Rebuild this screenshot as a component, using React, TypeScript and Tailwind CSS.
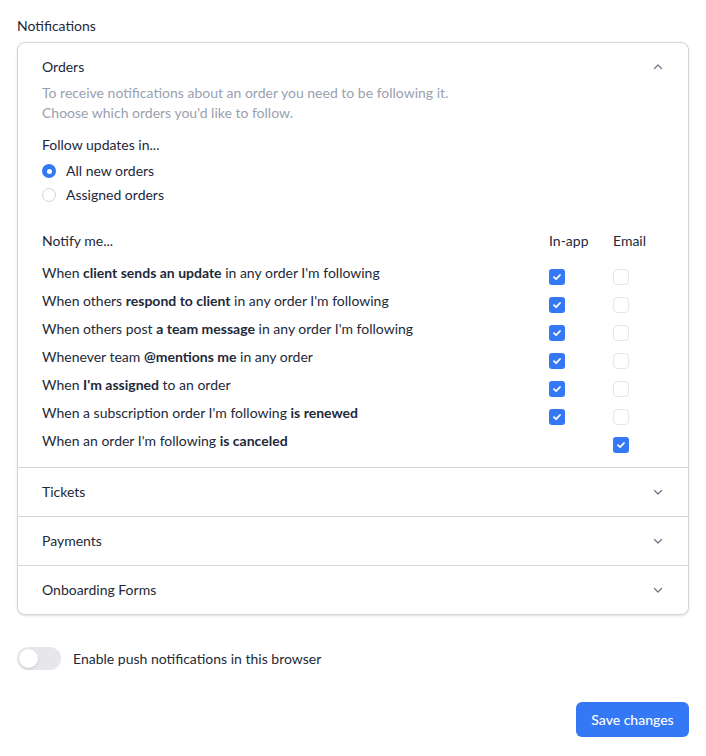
import { useState } from 'react'

const rows = [
  { pre: 'When ', bold: 'client sends an update', post: " in any order I'm following", app: true, email: false },
  { pre: 'When others ', bold: 'respond to client', post: " in any order I'm following", app: true, email: false },
  { pre: 'When others post ', bold: 'a team message', post: " in any order I'm following", app: true, email: false },
  { pre: 'Whenever team ', bold: '@mentions me', post: ' in any order', app: true, email: false },
  { pre: 'When ', bold: "I'm assigned", post: ' to an order', app: true, email: false },
  { pre: "When a subscription order I'm following ", bold: 'is renewed', post: '', app: true, email: false },
  { pre: "When an order I'm following ", bold: 'is canceled', post: '', app: null, email: true },
]

const Chevron = ({ up }: { up?: boolean }) => (
  <svg width="12" height="12" viewBox="0 0 12 12" fill="none" className="text-gray-500">
    <path
      d={up ? 'M2.5 7.5 6 4l3.5 3.5' : 'M2.5 4.5 6 8l3.5-3.5'}
      stroke="currentColor"
      strokeWidth="1.2"
      strokeLinecap="round"
      strokeLinejoin="round"
    />
  </svg>
)

const Checkbox = ({ checked }: { checked: boolean }) =>
  checked ? (
    <span className="flex h-4 w-4 items-center justify-center rounded-[3px] bg-[#3478f6]">
      <svg width="10" height="10" viewBox="0 0 10 10" fill="none">
        <path d="M2 5.2 4.1 7.2 8 3" stroke="white" strokeWidth="1.8" strokeLinecap="round" strokeLinejoin="round" />
      </svg>
    </span>
  ) : (
    <span className="block h-4 w-4 rounded-[4px] border border-gray-200 bg-white" />
  )

const Section = ({ title }: { title: string }) => (
  <div className="flex items-center justify-between border-t border-gray-300 py-[14px] pl-6 pr-6">
    <span className="leading-5 text-gray-800">{title}</span>
    <Chevron />
  </div>
)

export default function App() {
  const [follow, setFollow] = useState('all')

  return (
    <div className="min-h-screen bg-white px-[17px] pt-4 text-[14px] text-gray-800" style={{ fontFamily: 'Lato, "Open Sans", sans-serif' }}>
      <h2 className="leading-5">Notifications</h2>
      <div className="mt-1.5 rounded-lg border border-gray-300 bg-white shadow-sm">
        <div className="px-6 pb-[14px] pt-[14px]">
          <div className="flex items-center justify-between">
            <span className="leading-5">Orders</span>
            <Chevron up />
          </div>
          <p className="mt-1.5 leading-5 text-gray-400">
            To receive notifications about an order you need to be following it.
            <br />
            Choose which orders you'd like to follow.
          </p>
          <p className="mt-3 leading-5">Follow updates in...</p>
          <div className="mt-1.5 flex flex-col gap-1">
            {[
              { id: 'all', label: 'All new orders' },
              { id: 'assigned', label: 'Assigned orders' },
            ].map((o) => (
              <label key={o.id} className="flex h-5 cursor-pointer items-center gap-2.5" onClick={() => setFollow(o.id)}>
                {follow === o.id ? (
                  <span className="flex h-[14px] w-[14px] items-center justify-center rounded-full bg-[#3478f6]">
                    <span className="h-[5px] w-[5px] rounded-full bg-white" />
                  </span>
                ) : (
                  <span className="block h-[14px] w-[14px] rounded-full border border-gray-300 bg-white" />
                )}
                <span className="leading-5">{o.label}</span>
              </label>
            ))}
          </div>

          <div className="mt-[26px] flex items-center">
            <span className="flex-1 leading-5">Notify me...</span>
            <span className="w-16 leading-5">In-app</span>
            <span className="w-[51px] leading-5">Email</span>
          </div>
          <div className="mt-3 flex flex-col gap-[6px]">
            {rows.map((r, i) => (
              <div key={i} className="flex items-start">
                <span className="flex-1 leading-5">
                  {r.pre}
                  <b className="font-bold">{r.bold}</b>
                  {r.post}
                </span>
                <span className="w-16 pt-1.5">{r.app !== null && <Checkbox checked={!!r.app} />}</span>
                <span className="w-[51px] pt-1.5">
                  <Checkbox checked={r.email} />
                </span>
              </div>
            ))}
          </div>
        </div>
        <Section title="Tickets" />
        <Section title="Payments" />
        <Section title="Onboarding Forms" />
      </div>

      <div className="mt-8 flex items-center gap-3">
        <span className="flex h-[23px] w-11 items-center rounded-full bg-gray-200 p-[2px]">
          <span className="h-[19px] w-[19px] rounded-full bg-white shadow-sm" />
        </span>
        <span className="leading-5">Enable push notifications in this browser</span>
      </div>

      <div className="mt-8 flex justify-end">
        <button className="h-[35px] w-[113px] rounded-md bg-[#3478f6] text-[14px] font-medium text-white">Save changes</button>
      </div>
    </div>
  )
}
